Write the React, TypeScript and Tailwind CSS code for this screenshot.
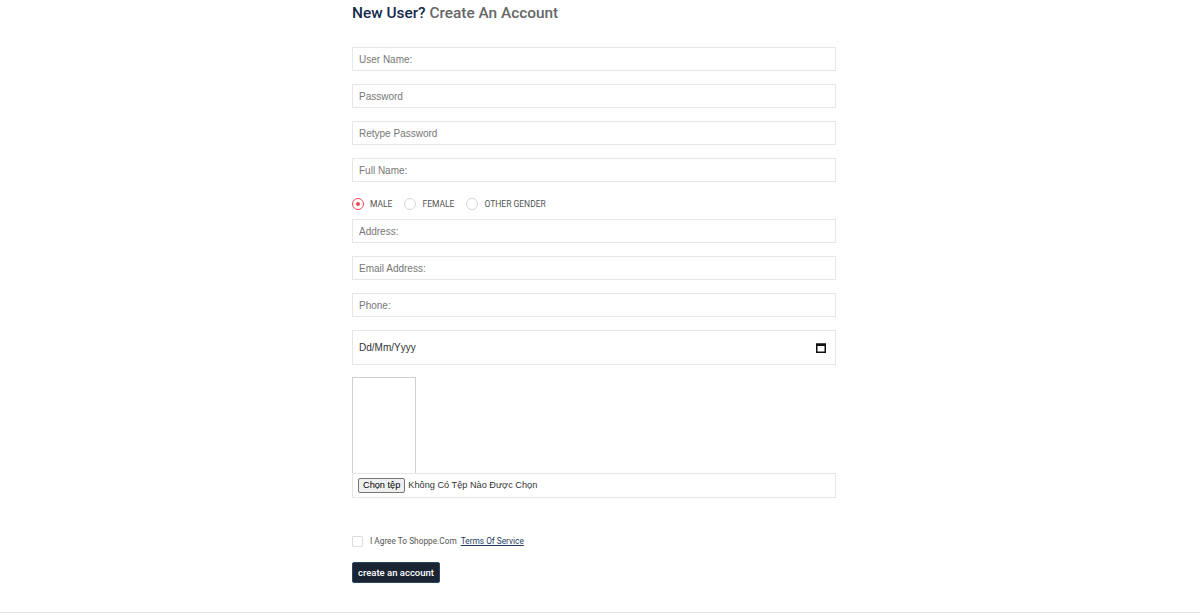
import React from 'react';

const inputCls =
  'block w-full h-[24px] border border-[#e6e6e6] px-[6px] text-[10px] text-[#333] placeholder:text-[#777] outline-none font-["Liberation_Sans",Arial,sans-serif]';

export default function App() {
  return (
    <div className="min-h-[615px] bg-white flex flex-col font-['Roboto',sans-serif]">
      <div className="w-[484px] ml-[352px] pt-[4px] flex-1">
        <h1 className="text-[15.4px] leading-[18px] font-medium h-[18px]">
          <span className="text-[#142a4c]">New User?</span>{' '}
          <span className="text-[#666]">Create An Account</span>
        </h1>

        <div className="mt-[25px] flex flex-col gap-[13px]">
          <input className={inputCls} placeholder="User Name:" />
          <input className={inputCls} placeholder="Password" type="password" />
          <input className={inputCls} placeholder="Retype Password" type="password" />
          <input className={inputCls} placeholder="Full Name:" />
        </div>

        {/* Gender */}
        <div className="mt-[13px] h-[18px] mb-[6px] flex items-center text-[8.5px] text-[#555] uppercase">
          <label className="flex items-center mr-[12px]">
            <span className="w-[12px] h-[12px] rounded-full border border-[#f2455c] flex items-center justify-center mr-[6px]">
              <span className="w-[4px] h-[4px] rounded-full bg-[#f2455c]" />
            </span>
            Male
          </label>
          <label className="flex items-center mr-[12px]">
            <span className="w-[12px] h-[12px] rounded-full border border-[#d6d6d6] mr-[6px]" />
            Female
          </label>
          <label className="flex items-center">
            <span className="w-[12px] h-[12px] rounded-full border border-[#d6d6d6] mr-[6px]" />
            Other Gender
          </label>
        </div>

        <div className="flex flex-col gap-[13px]">
          <input className={inputCls} placeholder="Address:" />
          <input className={inputCls} placeholder="Email Address:" />
          <input className={inputCls} placeholder="Phone:" />
          <div className="h-[35px] border border-[#e6e6e6] px-[6px] flex items-center justify-between font-['Liberation_Sans',Arial,sans-serif] text-[10px] text-[#333]">
            <span>Dd/Mm/Yyyy</span>
            <svg width="10" height="10" viewBox="0 0 10 10" className="mr-[3px]">
              <rect x="0.75" y="1.25" width="8.5" height="8" fill="none" stroke="#111" strokeWidth="1.5" />
              <rect x="0" y="0.5" width="10" height="2.5" fill="#111" />
            </svg>
          </div>
        </div>

        {/* Avatar preview + file */}
        <div className="mt-[12px] w-[64px] h-[96px] border border-[#cfcfcf] border-b-0" />
        <div className="h-[25px] border border-[#e6e6e6] flex items-center px-[5px] font-['Liberation_Sans',Arial,sans-serif] text-[9.2px] text-[#333]">
          <button className="h-[15px] px-[4px] border border-[#767676] rounded-[2px] bg-[#efefef] text-[9.2px] leading-[13px] text-black mr-[3px]">
            Chọn tệp
          </button>
          <span>Không Có Tệp Nào Được Chọn</span>
        </div>

        <div className="mt-[37px] flex items-center text-[8.3px] text-[#555]">
          <span className="w-[11px] h-[11px] border border-[#dcdcdc] rounded-[1px] mr-[7px]" />
          <span>I Agree To Shoppe.Com&nbsp;</span>
          <a className="ml-[2px] text-[#1e3a5f] underline">Terms Of Service</a>
        </div>

        <button className="mt-[15px] h-[21px] w-[88px] rounded-[2px] bg-[#1b2433] border border-[#2c4560] text-white text-[9.5px] font-medium">
          create an account
        </button>
      </div>
      <div className="h-[3px] border-t border-[#e3e3e3]" />
    </div>
  );
}
